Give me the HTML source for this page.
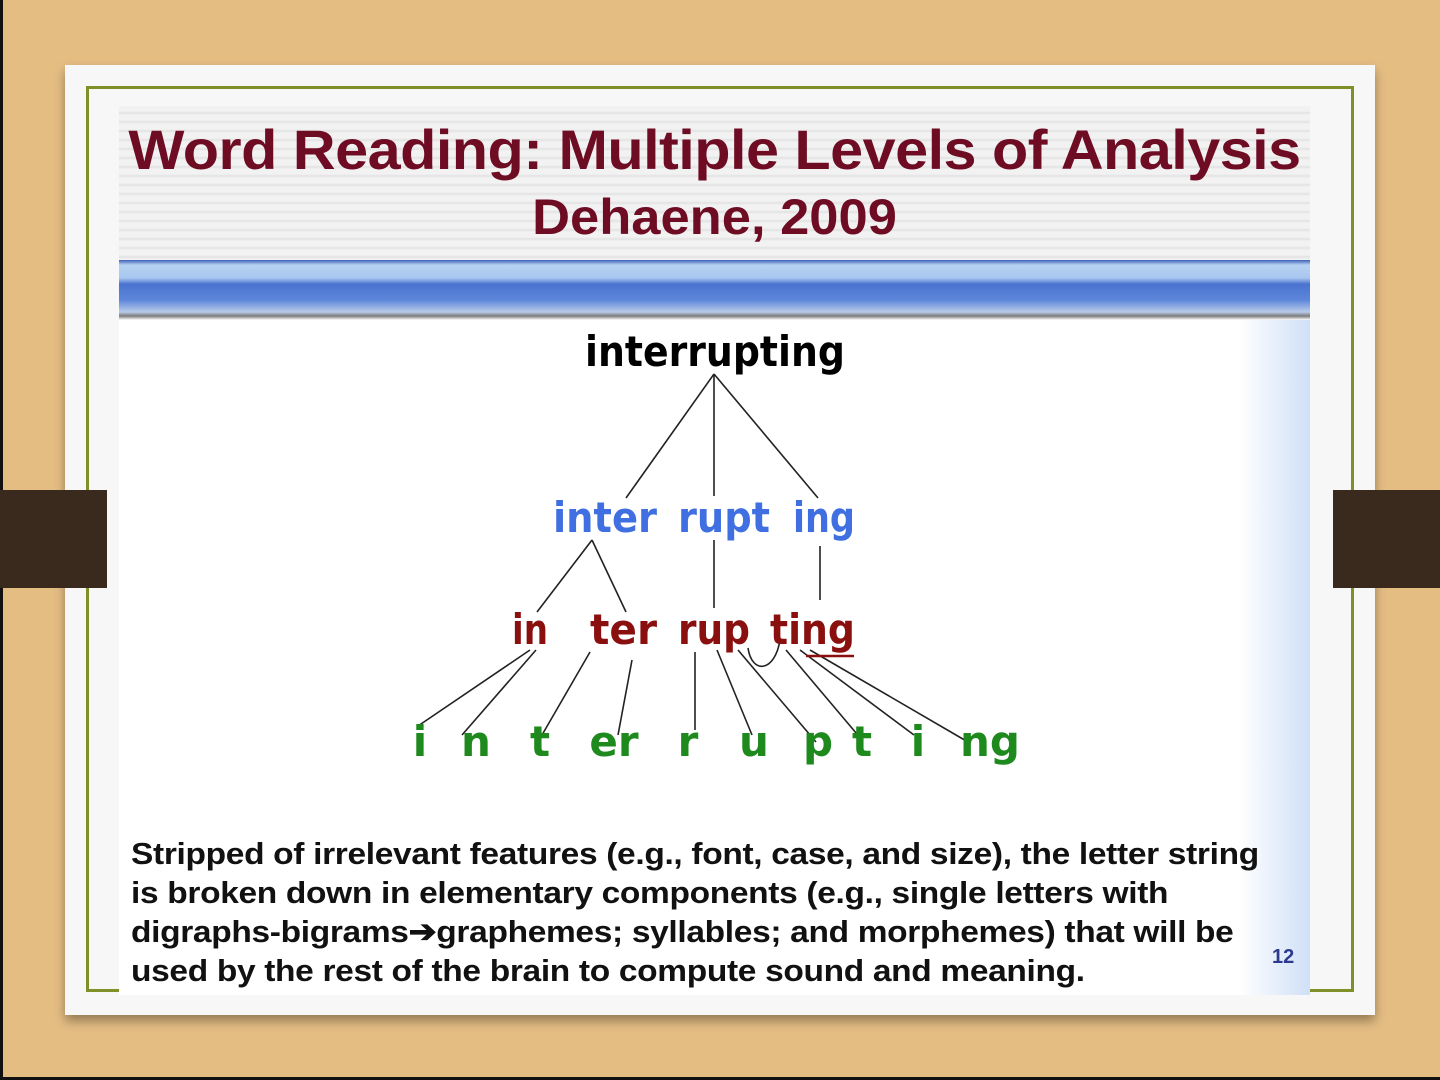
<!DOCTYPE html>
<html><head><style>
body{margin:0;width:1440px;height:1080px;overflow:hidden;background:#e4bd83;position:relative;font-family:"Liberation Sans",sans-serif}
.edge{position:absolute;background:#111}
.card{position:absolute;left:65px;top:65px;width:1310px;height:950px;background:#f7f7f7;box-shadow:0 6px 10px rgba(0,0,0,.35)}
.green{position:absolute;left:86px;top:86px;width:1262px;height:900px;border:3px solid #7d9128}
.slide{position:absolute;left:119px;top:106px;width:1191px;height:889px;background:linear-gradient(90deg,#fff 0,#fff 94%,#cfe0f7 100%)}
.title{position:absolute;left:0;top:0;width:100%;height:154px;background:repeating-linear-gradient(180deg,#f2f2f2 0,#f2f2f2 5px,#e2e2e2 7px,#f2f2f2 9px);text-align:center;color:#6e0c24;font-weight:bold}
.bar{position:absolute;left:0;top:154px;width:100%;height:60px;background:linear-gradient(180deg,#3e60b8 0,#b6d2f2 5px,#a8c6ef 18px,#4a73d0 24px,#5d86da 40px,#b9cbe8 52px,#7c7c7c 56px,#fff 60px)}
.tab{position:absolute;top:490px;width:107px;height:98px;background:#3a2a1e}
</style></head><body>
<div class="edge" style="left:0;top:0;width:3px;height:1080px"></div>
<div class="edge" style="left:0;top:1077px;width:1440px;height:3px"></div>
<div class="card"></div>
<div class="green"></div>
<div class="slide">
<div class="title"><div style="font-size:56px;position:absolute;top:11px;width:100%;transform:scaleX(1.06);letter-spacing:-0.5px">Word Reading: Multiple Levels of Analysis</div><div style="font-size:50px;position:absolute;top:82px;width:100%;transform:scaleX(1.05)">Dehaene, 2009</div></div>
<div class="bar"></div>
</div>
<div class="tab" style="left:0"></div>
<div class="tab" style="left:1333px"></div>
<svg width="1440" height="1080" style="position:absolute;left:0;top:0" font-family="DejaVu Sans, sans-serif">
<g stroke="#222" stroke-width="1.6" fill="none">
<line x1="714" y1="374" x2="626" y2="498"/><line x1="714" y1="374" x2="714" y2="496"/><line x1="714" y1="374" x2="818" y2="498"/>
<line x1="592" y1="540" x2="537" y2="612"/><line x1="592" y1="540" x2="626" y2="612"/>
<line x1="714" y1="540" x2="714" y2="608"/><line x1="820" y1="546" x2="820" y2="600"/>
<line x1="530" y1="650" x2="418" y2="726"/><line x1="536" y1="650" x2="462" y2="735"/><line x1="590" y1="652" x2="542" y2="735"/><line x1="632" y1="660" x2="618" y2="735"/>
<line x1="695" y1="652" x2="695" y2="730"/><line x1="717" y1="650" x2="752" y2="735"/><line x1="738" y1="650" x2="816" y2="742"/>
<line x1="786" y1="650" x2="862" y2="740"/><line x1="800" y1="650" x2="914" y2="735"/><line x1="810" y1="650" x2="968" y2="742"/>
<path d="M748 648 C752 675 775 672 780 640"/>
</g>
<text x="585" y="366" textLength="260" lengthAdjust="spacingAndGlyphs" font-size="42" font-weight="bold" fill="#000">interrupting</text>
<g font-size="42" font-weight="bold" fill="#3f6fe0">
<text x="553" y="532" textLength="104" lengthAdjust="spacingAndGlyphs">inter</text>
<text x="678" y="532" textLength="92" lengthAdjust="spacingAndGlyphs">rupt</text>
<text x="793" y="532" textLength="62" lengthAdjust="spacingAndGlyphs">ing</text>
</g>
<g font-size="42" font-weight="bold" fill="#8a0f0f">
<text x="512" y="644" textLength="36" lengthAdjust="spacingAndGlyphs">in</text>
<text x="590" y="644" textLength="67" lengthAdjust="spacingAndGlyphs">ter</text>
<text x="678" y="644" textLength="72" lengthAdjust="spacingAndGlyphs">rup</text>
<text x="770" y="644" textLength="85" lengthAdjust="spacingAndGlyphs">ting</text>
</g>
<line x1="806" y1="656" x2="854" y2="656" stroke="#8a0f0f" stroke-width="2.5"/>
<g font-size="42" font-weight="bold" fill="#1e8a1e" text-anchor="middle">
<text x="420" y="756">i</text><text x="476" y="756">n</text><text x="540" y="756">t</text><text x="614" y="756">er</text><text x="688" y="756">r</text><text x="754" y="756">u</text><text x="818" y="756">p</text><text x="862" y="756">t</text><text x="918" y="756">i</text><text x="990" y="756">ng</text>
</g>
</svg>
<div style="position:absolute;left:131px;top:834px;font-size:31px;font-weight:bold;line-height:39px;color:#111;letter-spacing:-0.3px;transform:scaleX(1.08);transform-origin:0 0;white-space:nowrap">Stripped of irrelevant features (e.g., font, case, and size), the letter string<br>is broken down in elementary components (e.g., single letters with<br>digraphs-bigrams➔graphemes; syllables; and morphemes) that will be<br>used by the rest of the brain to compute sound and meaning.</div>
<div style="position:absolute;left:1272px;top:946px;font-size:20px;font-weight:bold;color:#2b3a8f">12</div>
</body></html>
